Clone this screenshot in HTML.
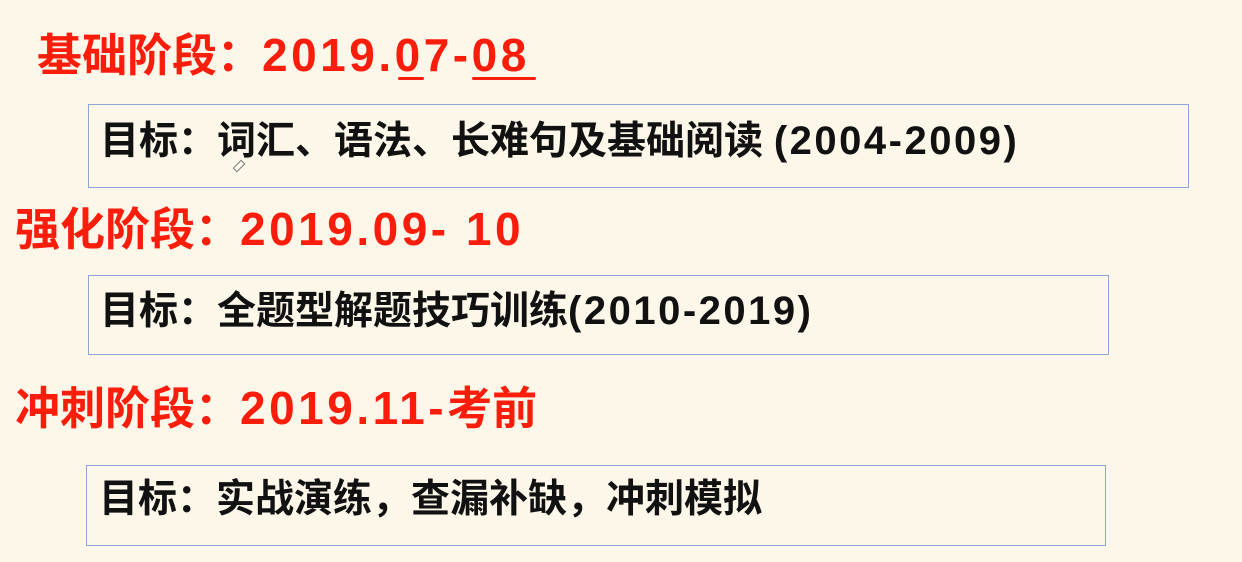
<!DOCTYPE html>
<html><head><meta charset="utf-8"><style>
html,body{margin:0;padding:0;}
body{width:1242px;height:562px;background:#fdf7ea;position:relative;overflow:hidden;font-family:"Liberation Sans","Noto Sans CJK SC",sans-serif;font-weight:bold;}
.h{position:absolute;color:#fb1d0c;font-size:45px;line-height:48px;white-space:nowrap;}
.h .l{font-size:46px;letter-spacing:3.5px;}
.b{position:absolute;border:1.5px solid #8ea5d8;box-sizing:border-box;}
.t{position:absolute;color:#111;font-size:39px;line-height:40px;white-space:nowrap;}
.t .l{font-size:40px;letter-spacing:2.5px;}
.u{position:absolute;height:3px;background:#fb1d0c;border-radius:2px;}
</style></head><body>
<div class="h" style="left:37px;top:31px;">基础阶段：<span class="l">2019.07-08</span></div>
<div class="u" style="left:398px;top:77px;width:26px;"></div>
<div class="u" style="left:472px;top:77px;width:64px;"></div>
<div class="b" style="left:88px;top:104px;width:1101px;height:84px;"></div>
<div class="t" style="left:100px;top:121px;">目标：词汇、语法、长难句及基础阅读 <span class="l">(2004-2009)</span></div>
<div style="position:absolute;left:233px;top:163px;width:10px;height:4px;border:1px solid #777;transform:rotate(-45deg);"></div>
<div class="h" style="left:15px;top:205px;">强化阶段：<span class="l">2019.09- 10</span></div>
<div class="b" style="left:88px;top:275px;width:1021px;height:80px;"></div>
<div class="t" style="left:100px;top:291px;">目标：全题型解题技巧训练<span class="l">(2010-2019)</span></div>
<div class="h" style="left:15px;top:384px;">冲刺阶段：<span class="l">2019.11-</span>考前</div>
<div class="b" style="left:86px;top:465px;width:1020px;height:81px;"></div>
<div class="t" style="left:99px;top:480px;">目标：实战演练，查漏补缺，冲刺模拟</div>
</body></html>
